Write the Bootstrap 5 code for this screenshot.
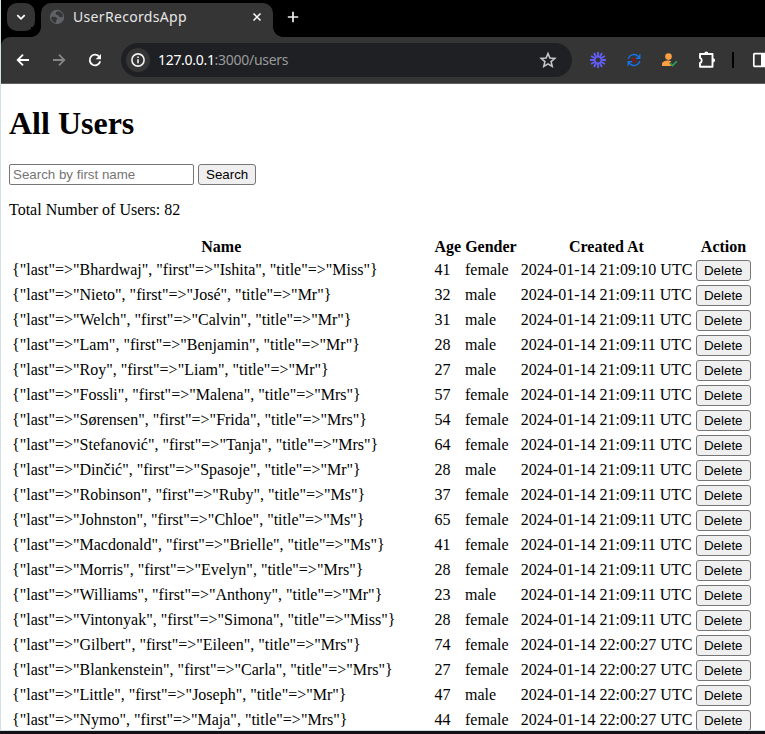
<!DOCTYPE html>
<html lang="en">
<head>
<meta charset="utf-8">
<meta name="viewport" content="width=device-width, initial-scale=1">
<title>UserRecordsApp</title>
<link href="https://cdn.jsdelivr.net/npm/bootstrap@5.3.0/dist/css/bootstrap.min.css" rel="stylesheet">
<style>
  body { background:#111114; height:734px; }
  .window { height:731px; border-left:1px solid #d3e0e3; border-bottom:1px solid #d3e0e3; background:#fff; }
  .chrome-ui { font-family:"Noto Sans",sans-serif; background:#000; }
  .tabstrip { height:37px; padding:3px 0 0 6px; border-top-left-radius:4px; }
  .tab-menu { width:28px; height:28px; border-radius:10px; background:#353535; }
  .tab-active { width:232px; height:34px; margin-left:6px; padding:0 10px 6px 8px; border-radius:10px 10px 0 0; background:#353535; color:#e6e6e6; font-size:14px; }
  .tab-active::before, .tab-active::after { content:""; position:absolute; bottom:0; width:10px; height:10px; }
  .tab-active::before { left:-10px; background:radial-gradient(circle at 0 0,#000 9.5px,#353535 10.2px); }
  .tab-active::after { right:-10px; background:radial-gradient(circle at 100% 0,#000 9.5px,#353535 10.2px); }
  .tab-title { margin-left:8px; letter-spacing:.32px; line-height:20px; }
  .new-tab { margin:8px 0 0 14px; }
  .toolbar { height:47px; background:#353535; border-bottom:1px solid #606060; border-top-left-radius:9px; padding-left:12px; }
  .address { width:451px; height:34px; margin-left:16px; padding:0 15px 0 5px; background:#1f2024; font-size:14px; color:#9a9a9a; }
  .site-info { width:24px; height:24px; background:#353535; }
  .url-text { margin-left:8px; line-height:20px; letter-spacing:-.28px; }
  .url-host { color:#fff; letter-spacing:-.3px; }
  .extensions { margin-left:17px; gap:19px; }
  .puzzle { margin-left:-1px; }
  .divider { width:2px; height:16px; margin-left:-4px; background:#000; }
  .side-panel { margin-left:-1px; }
  svg { display:block; flex:none; }
  .page { font-family:"Liberation Serif",serif; font-size:16px; line-height:18px; color:#000; padding:21px 8px 0; height:646px; }
  .page h1 { font-size:32px; line-height:37px; font-weight:700; margin:0 0 22px; }
  .search-row { gap:4px; margin-bottom:16px; height:21px; }
  .field, .push { font-family:"Liberation Sans",sans-serif; font-size:13.333px; line-height:15px; color:#000; border:1px solid #767676; }
  .field { width:185px; height:21px; padding:1px 3px; border-radius:2px; }
  .field::placeholder { color:#757575; opacity:1; }
  .push { display:block; height:21px; padding:1px 7px; border-radius:3px; background:#efefef; white-space:nowrap; }
  .total { margin-bottom:16px; }
  .users { border-collapse:separate; border-spacing:2px; table-layout:fixed; width:745px; }
  .users th, .users td { padding:1px; white-space:nowrap; }
  .users th { text-align:center; height:20px; }
  .users td { height:23px; vertical-align:middle; }
  .users td:not(:last-child) { padding-bottom:3px; }
</style>
<script src="https://cdn.jsdelivr.net/npm/bootstrap@5.3.0/dist/js/bootstrap.bundle.min.js"></script>
</head>
<body class="overflow-hidden">
<div class="window overflow-hidden">
  <header class="chrome-ui">
    <div class="tabstrip d-flex">
      <div class="tab-menu d-flex align-items-center justify-content-center">
        <svg width="12" height="12" viewBox="0 0 12 12" fill="none" stroke="#fff" stroke-width="1.8"><path d="M2.3 4.2 6 7.8l3.7-3.6"/></svg>
      </div>
      <div class="tab-active d-flex align-items-center position-relative">
        <svg width="16" height="16" viewBox="0 0 16 16"><circle cx="8" cy="8" r="7.2" fill="#5f6368"/><path d="M9.600 2.200C7.500 2.200 6.200 3.500 6.800 5c.5 1.200 2.400.8 3 2 .5 1 1.800 1.500 4.200 1.100l-.3-2.300-1.700-2.600zM2.200 8c2.200-.5 5.600-.2 6 1.600.2 1-.9 1.200-1 2.200-.1.700 0 1.300-.4 2.100-2.800-.5-4.800-3-4.600-5.900z" fill="#353535"/></svg>
        <span class="tab-title">UserRecordsApp</span>
        <svg class="ms-auto" width="12" height="12" viewBox="0 0 12 12" stroke="#fff" stroke-width="1.5"><path d="m2.500 2.500 7 7m0-7-7 7"/></svg>
      </div>
      <svg class="new-tab" width="12" height="12" viewBox="0 0 12 12" stroke="#eee" stroke-width="1.700"><path d="M6 .8v10.400M.8 6h10.400"/></svg>
    </div>
    <div class="toolbar d-flex align-items-center overflow-hidden">
      <svg width="20" height="20" viewBox="0 0 20 20" fill="none" stroke="#fff" stroke-width="1.800"><path d="M16 10H4.800M10 4.700 4.700 10l5.300 5.300"/></svg>
      <svg class="ms-3" width="20" height="20" viewBox="0 0 20 20" fill="none" stroke="#858585" stroke-width="1.800"><path d="M4 10h11.200M10 4.700l5.300 5.300-5.300 5.300"/></svg>
      <svg class="ms-3" width="20" height="20" viewBox="0 0 20 20" fill="none" stroke="#fff" stroke-width="1.800"><path d="M15.200 11.200A5.300 5.300 0 1 1 14.400 7"/><path d="M16 3.900v5.400h-5.400z" fill="#fff" stroke="none"/></svg>
      <div class="address rounded-pill d-flex align-items-center flex-shrink-0">
        <span class="site-info rounded-circle d-flex align-items-center justify-content-center">
          <svg width="16" height="16" viewBox="0 0 16 16" fill="none" stroke="#f2f2f2"><circle cx="8" cy="8" r="6.100" stroke-width="1.600"/><path d="M8 7.200v4.100M8 4.500v1.600" stroke-width="1.600"/></svg>
        </span>
        <span class="url-text"><span class="url-host">127.0.0.1</span>:3000/users</span>
        <svg class="ms-auto" width="18" height="18" viewBox="0 0 18 18" fill="none" stroke="#c7c7c7" stroke-width="1.600"><path d="m9 2.500 1.900 4.500 4.900.4-3.700 3.200 1.100 4.800L9 12.900l-4.200 2.500 1.100-4.800-3.700-3.200 4.900-.4z"/></svg>
      </div>
      <div class="extensions d-flex align-items-center flex-shrink-0">
        <svg width="18" height="18" viewBox="-9 -9 18 18" stroke="#625df5" stroke-width="1.900"><path d="M0-8V-3M0 3v5M-8 0h5M3 0h5M-4-6.930-1.500-2.600M1.500 2.600 4 6.930M4-6.930 1.500-2.600M-1.500 2.600-4 6.930M-6.930-4-2.600-1.500M2.600 1.500 6.930 4M6.930-4 2.600-1.500M-2.600 1.500-6.930 4"/><circle r="3.100" fill="none" stroke-width="1.200"/></svg>
        <svg width="16" height="16" viewBox="0 0 16 16" fill="none" stroke="#1473e6" stroke-width="1.400"><path d="M2.200 6.700C3.200 2.900 8 1.200 11.400 3.600L13 5.300M13.800 2.300v3.900H9.800M13.800 9.300c-1 3.800-5.800 5.500-9.200 3.100L3 10.700M2.200 13.700V9.800h4"/><path d="M9.700 6.400H7.200L6.300 8l.9 1.600h2.500M6.500 8h3.200" stroke="#8b171d" stroke-width="1.200"/></svg>
        <svg width="18" height="16" viewBox="0 0 18 16"><circle cx="7.500" cy="4.600" r="3.300" fill="#ff9f43"/><path d="M1 14v-2c0-2 3-3.500 6.200-3.500 1.300 0 2.300.3 3.100.7l-2 2 2.500 2.800z" fill="#ff9f43"/><path d="m9.300 11.300 2.300 2.300 4.200-4.400" fill="none" stroke="#27a35a" stroke-width="1.600"/></svg>
        <svg class="puzzle" width="20" height="20" viewBox="0 0 20 20"><path d="M3 4h12.500v12.700H3v-3.700c2.300-.6 2.300-4.500 0-5.100z" fill="none" stroke="#fff" stroke-width="1.900" stroke-linejoin="round"/><path d="M7.200 3.500a2.100 2.100 0 0 1 4.200 0zM16 8.200a2.100 2.100 0 0 1 0 4.200z" fill="#fff"/></svg>
        <div class="divider"></div>
        <svg class="side-panel" width="18" height="18" viewBox="0 0 18 18"><rect x="1.800" y="2.600" width="15.500" height="12.800" rx="1" fill="none" stroke="#fff" stroke-width="1.700"/><path d="M9 2.500h8v13H9z" fill="#fff"/></svg>
      </div>
    </div>
  </header>
  <main class="page overflow-hidden">
    <h1>All Users</h1>
    <form class="search-row d-flex">
      <input class="field" type="text" placeholder="Search by first name">
      <button class="push" type="button">Search</button>
    </form>
    <p class="total">Total Number of Users: 82</p>
    <table class="users">
      <colgroup><col style="width:420.500px"><col style="width:28.500px"><col style="width:53.800px"><col style="width:173.200px"><col style="width:57px"></colgroup>
      <thead><tr><th>Name</th><th>Age</th><th>Gender</th><th>Created At</th><th>Action</th></tr></thead>
      <tbody>
        <tr><td>{"last"=&gt;"Bhardwaj", "first"=&gt;"Ishita", "title"=&gt;"Miss"}</td><td>41</td><td>female</td><td>2024-01-14 21:09:10 UTC</td><td><button class="push">Delete</button></td></tr>
        <tr><td>{"last"=&gt;"Nieto", "first"=&gt;"José", "title"=&gt;"Mr"}</td><td>32</td><td>male</td><td>2024-01-14 21:09:11 UTC</td><td><button class="push">Delete</button></td></tr>
        <tr><td>{"last"=&gt;"Welch", "first"=&gt;"Calvin", "title"=&gt;"Mr"}</td><td>31</td><td>male</td><td>2024-01-14 21:09:11 UTC</td><td><button class="push">Delete</button></td></tr>
        <tr><td>{"last"=&gt;"Lam", "first"=&gt;"Benjamin", "title"=&gt;"Mr"}</td><td>28</td><td>male</td><td>2024-01-14 21:09:11 UTC</td><td><button class="push">Delete</button></td></tr>
        <tr><td>{"last"=&gt;"Roy", "first"=&gt;"Liam", "title"=&gt;"Mr"}</td><td>27</td><td>male</td><td>2024-01-14 21:09:11 UTC</td><td><button class="push">Delete</button></td></tr>
        <tr><td>{"last"=&gt;"Fossli", "first"=&gt;"Malena", "title"=&gt;"Mrs"}</td><td>57</td><td>female</td><td>2024-01-14 21:09:11 UTC</td><td><button class="push">Delete</button></td></tr>
        <tr><td>{"last"=&gt;"Sørensen", "first"=&gt;"Frida", "title"=&gt;"Mrs"}</td><td>54</td><td>female</td><td>2024-01-14 21:09:11 UTC</td><td><button class="push">Delete</button></td></tr>
        <tr><td>{"last"=&gt;"Stefanović", "first"=&gt;"Tanja", "title"=&gt;"Mrs"}</td><td>64</td><td>female</td><td>2024-01-14 21:09:11 UTC</td><td><button class="push">Delete</button></td></tr>
        <tr><td>{"last"=&gt;"Dinčić", "first"=&gt;"Spasoje", "title"=&gt;"Mr"}</td><td>28</td><td>male</td><td>2024-01-14 21:09:11 UTC</td><td><button class="push">Delete</button></td></tr>
        <tr><td>{"last"=&gt;"Robinson", "first"=&gt;"Ruby", "title"=&gt;"Ms"}</td><td>37</td><td>female</td><td>2024-01-14 21:09:11 UTC</td><td><button class="push">Delete</button></td></tr>
        <tr><td>{"last"=&gt;"Johnston", "first"=&gt;"Chloe", "title"=&gt;"Ms"}</td><td>65</td><td>female</td><td>2024-01-14 21:09:11 UTC</td><td><button class="push">Delete</button></td></tr>
        <tr><td>{"last"=&gt;"Macdonald", "first"=&gt;"Brielle", "title"=&gt;"Ms"}</td><td>41</td><td>female</td><td>2024-01-14 21:09:11 UTC</td><td><button class="push">Delete</button></td></tr>
        <tr><td>{"last"=&gt;"Morris", "first"=&gt;"Evelyn", "title"=&gt;"Mrs"}</td><td>28</td><td>female</td><td>2024-01-14 21:09:11 UTC</td><td><button class="push">Delete</button></td></tr>
        <tr><td>{"last"=&gt;"Williams", "first"=&gt;"Anthony", "title"=&gt;"Mr"}</td><td>23</td><td>male</td><td>2024-01-14 21:09:11 UTC</td><td><button class="push">Delete</button></td></tr>
        <tr><td>{"last"=&gt;"Vintonyak", "first"=&gt;"Simona", "title"=&gt;"Miss"}</td><td>28</td><td>female</td><td>2024-01-14 21:09:11 UTC</td><td><button class="push">Delete</button></td></tr>
        <tr><td>{"last"=&gt;"Gilbert", "first"=&gt;"Eileen", "title"=&gt;"Mrs"}</td><td>74</td><td>female</td><td>2024-01-14 22:00:27 UTC</td><td><button class="push">Delete</button></td></tr>
        <tr><td>{"last"=&gt;"Blankenstein", "first"=&gt;"Carla", "title"=&gt;"Mrs"}</td><td>27</td><td>female</td><td>2024-01-14 22:00:27 UTC</td><td><button class="push">Delete</button></td></tr>
        <tr><td>{"last"=&gt;"Little", "first"=&gt;"Joseph", "title"=&gt;"Mr"}</td><td>47</td><td>male</td><td>2024-01-14 22:00:27 UTC</td><td><button class="push">Delete</button></td></tr>
        <tr><td>{"last"=&gt;"Nymo", "first"=&gt;"Maja", "title"=&gt;"Mrs"}</td><td>44</td><td>female</td><td>2024-01-14 22:00:27 UTC</td><td><button class="push">Delete</button></td></tr>
      </tbody>
    </table>
  </main>
</div>
</body>
</html>
